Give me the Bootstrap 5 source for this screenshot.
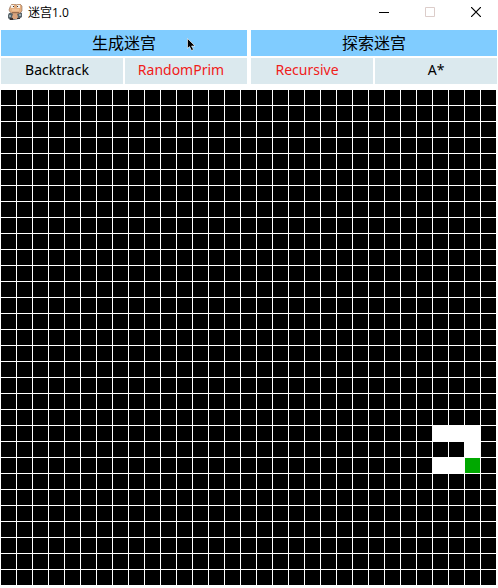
<!DOCTYPE html>
<html lang="zh-CN">
<head>
<meta charset="utf-8">
<meta name="viewport" content="width=device-width, initial-scale=1">
<title>迷宫1.0</title>
<link href="https://cdn.jsdelivr.net/npm/bootstrap@5.3.0/dist/css/bootstrap.min.css" rel="stylesheet">
<style>
body{background:#fff;color:#000;font-family:"Noto Sans","Noto Sans CJK SC",sans-serif}
.titlebar{height:30px;padding-left:8px}
.app-name{font-size:12px;line-height:16px;font-family:"Open Sans","Noto Sans CJK SC",sans-serif}
.win-btn{width:46px;height:24px;background:none;border:0;padding:0 17px 0 19px}
.panels{padding:0 1px;gap:4px}
.panel{gap:2px}
.tool{border:0;border-radius:0;height:26px;padding:0;line-height:24px;color:#000;white-space:nowrap}
.tool-main{background:#80ccff;font-size:16px}
.tool-sub{background:#dbe9ee;font-size:14px;padding-bottom:2px}
.tool-shift{padding-right:10px}
.chosen{color:#f0201a}
.maze{display:grid;grid-template-columns:repeat(31,1fr);gap:1px;padding:6px 2px 3px 1px}
.cell{aspect-ratio:1;background:#000}
.path{background:#fff;box-shadow:0 0 0 1px #fff}
.here{background:#00a800}
.pointer{position:absolute;left:187px;top:38px}
</style>
<script src="https://cdn.jsdelivr.net/npm/bootstrap@5.3.0/dist/js/bootstrap.bundle.min.js"></script>
</head>
<body>
<header class="titlebar d-flex align-items-start justify-content-between">
  <div class="d-flex align-items-center pt-1 gap-1">
    <svg width="16" height="17" viewBox="0 0 16 17" aria-hidden="true">
      <path d="M1 9 0 11v3l2 2h3l6-1 3-2V9l-2-1z" fill="#59656b"/>
      <path d="M2 3 4 0h3l1 1 2-1h2l2 2v5l-2 2-3 1H5L2 8 1 6z" fill="#e3ae80" stroke="#8a6a55" stroke-width=".6"/>
      <path d="M3 1h3v3H3zM9 1h3v3H9z" fill="#f4eee8"/>
      <path d="M5 2h1v1H5zM9 2h1v1H9z" fill="#333"/>
      <path d="M4 5h7v2H4z" fill="#efbf93"/>
      <path d="M4 8h7v1H4z" fill="#9b6d50"/>
      <path d="M5 10h4l1 3-1 2H5l-1-2z" fill="#d9a27c"/>
      <path d="M1 11h2v2H1zM11 10h2v2h-2z" fill="#9aa8ae"/>
      <path d="M2 14h3v2H2zM9 14h3v1H9z" fill="#3c3030"/>
    </svg>
    <span class="app-name">迷宫1.0</span>
  </div>
  <div class="d-flex">
    <button type="button" class="win-btn" aria-label="最小化"><svg class="d-block" width="10" height="11" viewBox="0 0 10 11"><path d="M0 5.5h10" stroke="#000"/></svg></button>
    <button type="button" class="win-btn" aria-label="最大化" disabled><svg class="d-block" width="10" height="10" viewBox="0 0 10 10"><path d="M.5.5h9v9h-9z" fill="none" stroke="#dccdca"/></svg></button>
    <button type="button" class="win-btn" aria-label="关闭"><svg class="d-block" width="10" height="10" viewBox="0 0 10 10"><path d="m0 0 10 10M10 0 0 10" stroke="#000" stroke-width="1.2"/></svg></button>
  </div>
</header>
<main>
  <div class="panels d-flex">
    <section class="panel d-flex flex-column flex-fill w-50">
      <button type="button" class="tool tool-main w-100">生成迷宫</button>
      <div class="panel d-flex">
        <button type="button" class="tool tool-sub tool-shift w-50">Backtrack</button>
        <button type="button" class="tool tool-sub tool-shift chosen w-50">RandomPrim</button>
      </div>
    </section>
    <section class="panel d-flex flex-column flex-fill w-50">
      <button type="button" class="tool tool-main w-100">探索迷宫</button>
      <div class="panel d-flex">
        <button type="button" class="tool tool-sub tool-shift chosen w-50">Recursive</button>
        <button type="button" class="tool tool-sub w-50">A*</button>
      </div>
    </section>
  </div>
  <div class="maze" id="maze"></div>
</main>
<svg class="pointer" width="9" height="13" viewBox="0 0 9 13" aria-hidden="true"><path d="M.5.5v10l2-2 2 4 2-1-2-3.500h3.500z" fill="#000" stroke="#fff" stroke-width=".6"/></svg>
<script>
const size = 31;
const carved = new Set(["21,27","21,28","21,29","22,29","23,27","23,28"]);
const maze = document.getElementById("maze");
for (let r = 0; r < size; r++) {
  for (let c = 0; c < size; c++) {
    const cell = document.createElement("div");
    cell.className = "cell";
    if (carved.has(r + "," + c)) cell.classList.add("path");
    if (r === 23 && c === 29) cell.classList.add("here");
    maze.append(cell);
  }
}
</script>
</body>
</html>
